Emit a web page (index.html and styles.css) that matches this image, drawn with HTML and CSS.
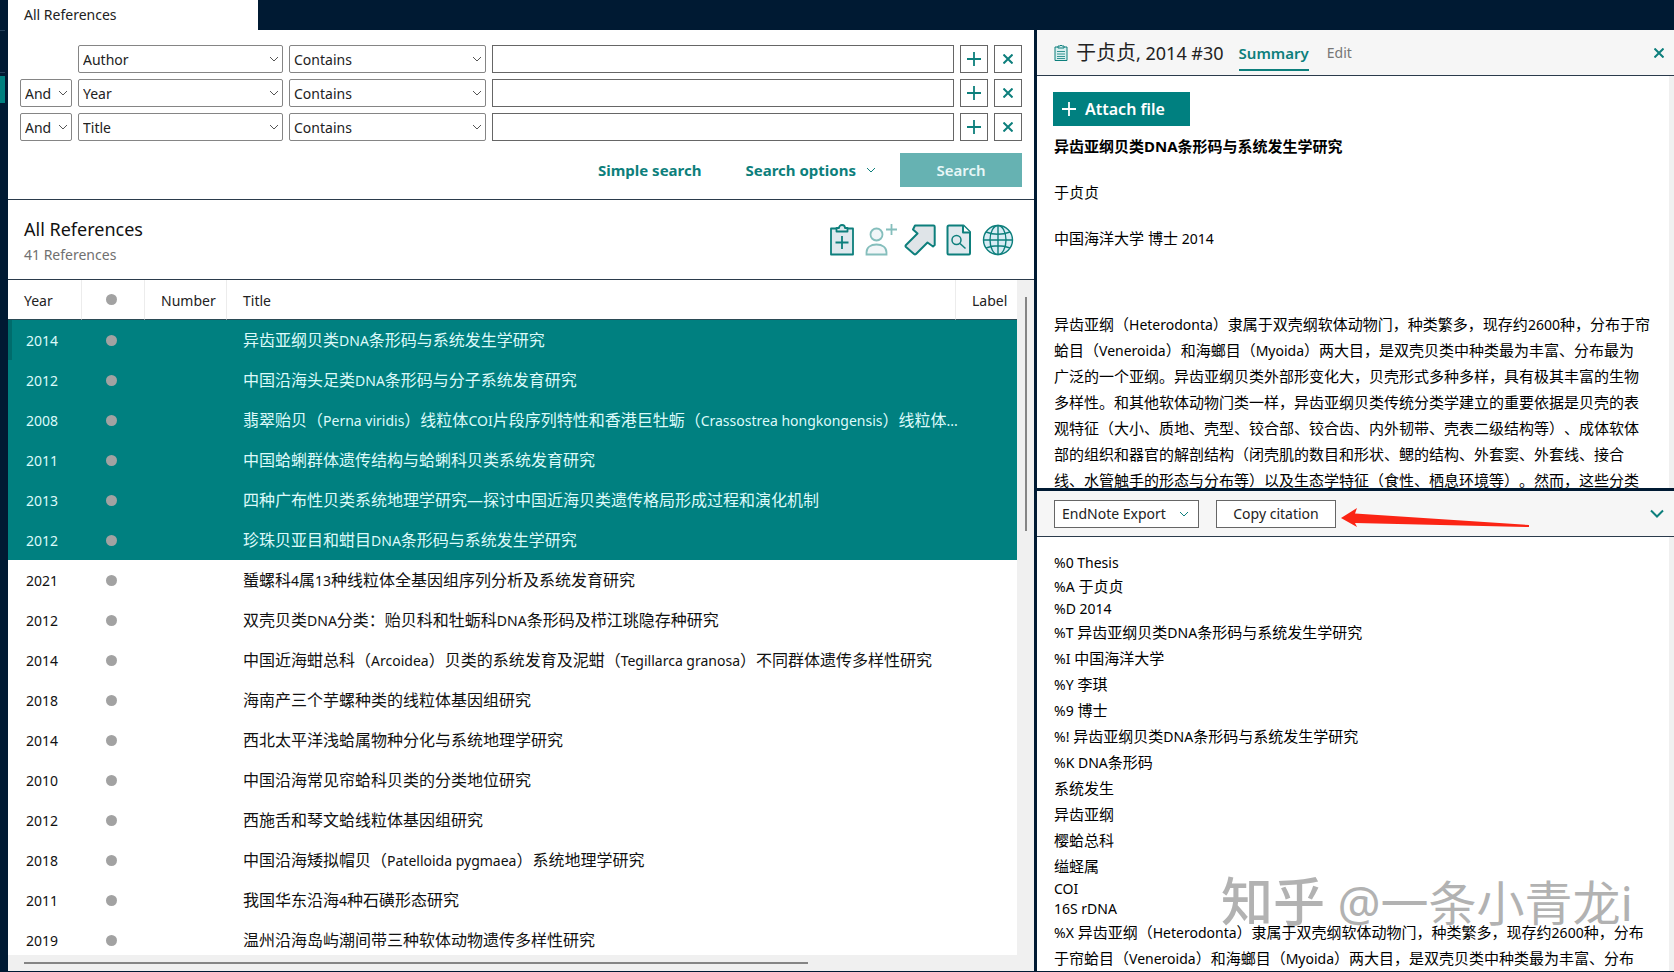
FILE: index.html
```html
<!DOCTYPE html>
<html lang="zh-CN">
<head>
<meta charset="utf-8">
<title>All References</title>
<link rel="stylesheet" href="styles.css">
</head>
<body>
<svg class="sprite" aria-hidden="true">
  <symbol id="chevron" viewBox="0 0 10 6"><path d="M1 1l4 4 4-4" fill="none" stroke="currentColor" stroke-width="1"/></symbol>
  <symbol id="chevron-bold" viewBox="0 0 14 9"><path d="M1 1.500l6 6 6-6" fill="none" stroke="currentColor" stroke-width="2"/></symbol>
  <symbol id="plus" viewBox="0 0 14 14"><path d="M7 0v14M0 7h14" fill="none" stroke="currentColor" stroke-width="1.800"/></symbol>
  <symbol id="cross" viewBox="0 0 10 10"><path d="M.5.5l9 9M9.500.5l-9 9" fill="none" stroke="currentColor" stroke-width="2"/></symbol>
</svg>
<div class="app">
  <div class="rail"><span class="rail-top"></span><span class="rail-item"></span><span class="rail-active"></span></div>
  <div class="tabs"><button class="tab" type="button">All References</button></div>

  <main class="library">
    <form class="search">
      <div class="rules">
        <div class="rule">
          <span></span>
          <label class="pick"><select aria-label="Field 1"><option>Author</option></select><svg><use href="#chevron"/></svg></label>
          <label class="pick"><select aria-label="Condition 1"><option>Contains</option></select><svg><use href="#chevron"/></svg></label>
          <input type="text" aria-label="Search term 1">
          <button class="square" type="button" aria-label="Add row"><svg class="plus"><use href="#plus"/></svg></button>
          <button class="square" type="button" aria-label="Remove row"><svg class="cross"><use href="#cross"/></svg></button>
        </div>
        <div class="rule">
          <label class="pick"><select aria-label="Operator 2"><option>And</option></select><svg><use href="#chevron"/></svg></label>
          <label class="pick"><select aria-label="Field 2"><option>Year</option></select><svg><use href="#chevron"/></svg></label>
          <label class="pick"><select aria-label="Condition 2"><option>Contains</option></select><svg><use href="#chevron"/></svg></label>
          <input type="text" aria-label="Search term 2">
          <button class="square" type="button" aria-label="Add row"><svg class="plus"><use href="#plus"/></svg></button>
          <button class="square" type="button" aria-label="Remove row"><svg class="cross"><use href="#cross"/></svg></button>
        </div>
        <div class="rule">
          <label class="pick"><select aria-label="Operator 3"><option>And</option></select><svg><use href="#chevron"/></svg></label>
          <label class="pick"><select aria-label="Field 3"><option>Title</option></select><svg><use href="#chevron"/></svg></label>
          <label class="pick"><select aria-label="Condition 3"><option>Contains</option></select><svg><use href="#chevron"/></svg></label>
          <input type="text" aria-label="Search term 3">
          <button class="square" type="button" aria-label="Add row"><svg class="plus"><use href="#plus"/></svg></button>
          <button class="square" type="button" aria-label="Remove row"><svg class="cross"><use href="#cross"/></svg></button>
        </div>
      </div>
      <div class="actions">
        <button class="text-button" type="button">Simple search</button>
        <button class="text-button" type="button">Search options <svg class="small-chevron"><use href="#chevron"/></svg></button>
        <button class="search-button" type="button">Search</button>
      </div>
    </form>

    <header class="group">
      <div>
        <h1>All References</h1>
        <p class="count">41 References</p>
      </div>
      <div class="tools">
        <button type="button" aria-label="New reference">
          <svg viewBox="0 0 32 32"><g fill="#dfe9ee" stroke="#0d7f7c" stroke-width="1.800" stroke-linejoin="round"><path d="M5 4.500h22v26h-22z"/><path d="M10.500 7.500v-3.500h2.500a3 3 0 0 1 6 0h2.500v3.500z"/><path d="M16 12v13M9.500 18.500h13" fill="none"/></g></svg>
        </button>
        <button type="button" class="faded" aria-label="Share group">
          <svg viewBox="0 0 32 32"><g fill="#e6eff2" stroke="#0d7f7c" stroke-width="1.800"><circle cx="11.500" cy="10.500" r="6"/><path d="M1.500 30.500v-2c0-5 4-8 10-8s10 3 10 8v2z"/><path d="M26.500 0v11M21 5.500h11" fill="none"/></g></svg>
        </button>
        <button type="button" aria-label="Export">
          <svg viewBox="0 0 32 32"><path d="M11 1.500h18.500a1.200 1.200 0 0 1 1.200 1.200V21l-1.700 1.500-5.500-4L12 30q-1 .8-2 0l-8-7q-1-1 0-2L13.500 9.500 9 5.500z" fill="#dfe4e8" stroke="#0d7f7c" stroke-width="2" stroke-linejoin="round"/></svg>
        </button>
        <button type="button" aria-label="Find full text">
          <svg viewBox="0 0 32 32"><g fill="#dfe9ee" stroke="#0d7f7c" stroke-width="2" stroke-linejoin="round"><path d="M6 1.500h14.500l6.500 6.500V29q0 1.500-1.500 1.500H6q-1.500 0-1.500-1.500V3q0-1.500 1.500-1.500z"/><path d="M20 1.500v7h7" fill="#fff"/><circle cx="13.500" cy="16" r="4.500" stroke-width="1.500"/><path d="M17 19.500l5.500 5" stroke-width="1.500"/></g></svg>
        </button>
        <button type="button" aria-label="Online search">
          <svg viewBox="0 0 32 32"><g fill="none" stroke="#0d7f7c" stroke-width="1.400"><circle cx="16" cy="16" r="14.500" fill="#d8ecf5"/><ellipse cx="16" cy="16" rx="8" ry="14.500"/><path d="M16 1.500v29M1.500 16h29M4 8q12 4.500 24 0M4 24q12-4.500 24 0"/></g></svg>
        </button>
      </div>
    </header>

    <div class="list">
      <div class="list-view">
        <table>
          <colgroup><col class="c-year"><col class="c-dot"><col class="c-number"><col><col class="c-label"></colgroup>
          <thead><tr><th>Year</th><th><i class="dot"></i></th><th>Number</th><th>Title</th><th>Label</th></tr></thead>
          <tbody>
            <tr class="on current"><td>2014</td><td><i class="dot"></i></td><td></td><td>异齿亚纲贝类<span class="en">DNA</span>条形码与系统发生学研究</td><td></td></tr>
            <tr class="on"><td>2012</td><td><i class="dot"></i></td><td></td><td>中国沿海头足类<span class="en">DNA</span>条形码与分子系统发育研究</td><td></td></tr>
            <tr class="on"><td>2008</td><td><i class="dot"></i></td><td></td><td>翡翠贻贝（<span class="en">Perna viridis</span>）线粒体<span class="en">COI</span>片段序列特性和香港巨牡蛎（<span class="en">Crassostrea hongkongensis</span>）线粒体<span class="en">...</span></td><td></td></tr>
            <tr class="on"><td>2011</td><td><i class="dot"></i></td><td></td><td>中国蛤蜊群体遗传结构与蛤蜊科贝类系统发育研究</td><td></td></tr>
            <tr class="on"><td>2013</td><td><i class="dot"></i></td><td></td><td>四种广布性贝类系统地理学研究—探讨中国近海贝类遗传格局形成过程和演化机制</td><td></td></tr>
            <tr class="on"><td>2012</td><td><i class="dot"></i></td><td></td><td>珍珠贝亚目和蚶目<span class="en">DNA</span>条形码与系统发生学研究</td><td></td></tr>
            <tr><td>2021</td><td><i class="dot"></i></td><td></td><td>蜑螺科<span class="en">4</span>属<span class="en">13</span>种线粒体全基因组序列分析及系统发育研究</td><td></td></tr>
            <tr><td>2012</td><td><i class="dot"></i></td><td></td><td>双壳贝类<span class="en">DNA</span>分类：贻贝科和牡蛎科<span class="en">DNA</span>条形码及栉江珧隐存种研究</td><td></td></tr>
            <tr><td>2014</td><td><i class="dot"></i></td><td></td><td>中国近海蚶总科（<span class="en">Arcoidea</span>）贝类的系统发育及泥蚶（<span class="en">Tegillarca granosa</span>）不同群体遗传多样性研究</td><td></td></tr>
            <tr><td>2018</td><td><i class="dot"></i></td><td></td><td>海南产三个芋螺种类的线粒体基因组研究</td><td></td></tr>
            <tr><td>2014</td><td><i class="dot"></i></td><td></td><td>西北太平洋浅蛤属物种分化与系统地理学研究</td><td></td></tr>
            <tr><td>2010</td><td><i class="dot"></i></td><td></td><td>中国沿海常见帘蛤科贝类的分类地位研究</td><td></td></tr>
            <tr><td>2012</td><td><i class="dot"></i></td><td></td><td>西施舌和琴文蛤线粒体基因组研究</td><td></td></tr>
            <tr><td>2018</td><td><i class="dot"></i></td><td></td><td>中国沿海矮拟帽贝（<span class="en">Patelloida pygmaea</span>）系统地理学研究</td><td></td></tr>
            <tr><td>2011</td><td><i class="dot"></i></td><td></td><td>我国华东沿海<span class="en">4</span>种石磺形态研究</td><td></td></tr>
            <tr><td>2019</td><td><i class="dot"></i></td><td></td><td>温州沿海岛屿潮间带三种软体动物遗传多样性研究</td><td></td></tr>
          </tbody>
        </table>
      </div>
      <div class="bar-v"><span class="thumb"></span></div>
      <div class="bar-h"><span class="thumb"></span></div>
    </div>
  </main>

  <aside class="detail">
    <header class="detail-head">
      <svg class="ref-icon" viewBox="0 0 14 18"><g fill="#d9efef" stroke="#0d7f7c"><path d="M1 3h12v13.500H1z"/><path d="M4 4V2h2q1-2 2 0h2v2z"/><path d="M3 7.500h8M3 10h8M3 12.500h8M3 14.500h8" stroke-width=".8"/></g></svg>
      <h2>于贞贞<span class="en">, 2014 #30</span></h2>
      <button class="view active" type="button">Summary</button>
      <button class="view" type="button">Edit</button>
      <button class="close" type="button" aria-label="Close"><svg class="cross"><use href="#cross"/></svg></button>
    </header>
    <section class="summary">
      <button class="attach" type="button"><svg class="plus"><use href="#plus"/></svg>Attach file</button>
      <p class="strong">异齿亚纲贝类<span class="en">DNA</span>条形码与系统发生学研究</p>
      <p>于贞贞</p>
      <p>中国海洋大学 博士 <span class="en">2014</span></p>
      <p class="abstract">异齿亚纲（<span class="en">Heterodonta</span>）隶属于双壳纲软体动物门，种类繁多，现存约<span class="en">2600</span>种，分布于帘<br>蛤目（<span class="en">Veneroida</span>）和海螂目（<span class="en">Myoida</span>）两大目，是双壳贝类中种类最为丰富、分布最为<br>广泛的一个亚纲。异齿亚纲贝类外部形变化大，贝壳形式多种多样，具有极其丰富的生物<br>多样性。和其他软体动物门类一样，异齿亚纲贝类传统分类学建立的重要依据是贝壳的表<br>观特征（大小、质地、壳型、铰合部、铰合齿、内外韧带、壳表二级结构等）、成体软体<br>部的组织和器官的解剖结构（闭壳肌的数目和形状、鳃的结构、外套窦、外套线、接合<br>线、水管触手的形态与分布等）以及生态学特征（食性、栖息环境等）。然而，这些分类</p>
    </section>
    <div class="cite-bar">
      <label class="pick style-pick"><select aria-label="Citation style"><option>EndNote Export</option></select><svg><use href="#chevron"/></svg></label>
      <button class="copy" type="button">Copy citation</button>
      <button class="collapse" type="button" aria-label="Collapse"><svg><use href="#chevron-bold"/></svg></button>
      <svg class="arrow" viewBox="0 0 190 20" aria-hidden="true"><path d="M0 10L16 0l-2 5.500L188 17v2L14 15l2 4z" fill="#fb2414"/></svg>
    </div>
    <section class="citation">
      <p class="en">%0 Thesis</p>
      <p><span class="en">%A</span> 于贞贞</p>
      <p class="en">%D 2014</p>
      <p><span class="en">%T</span> 异齿亚纲贝类<span class="en">DNA</span>条形码与系统发生学研究</p>
      <p><span class="en">%I</span> 中国海洋大学</p>
      <p><span class="en">%Y</span> 李琪</p>
      <p><span class="en">%9</span> 博士</p>
      <p><span class="en">%!</span> 异齿亚纲贝类<span class="en">DNA</span>条形码与系统发生学研究</p>
      <p><span class="en">%K DNA</span>条形码</p>
      <p>系统发生</p>
      <p>异齿亚纲</p>
      <p>樱蛤总科</p>
      <p>缢蛏属</p>
      <p class="en">COI</p>
      <p class="en">16S rDNA</p>
      <p><span class="en">%X</span> 异齿亚纲（<span class="en">Heterodonta</span>）隶属于双壳纲软体动物门，种类繁多，现存约<span class="en">2600</span>种，分布<br>于帘蛤目（<span class="en">Veneroida</span>）和海螂目（<span class="en">Myoida</span>）两大目，是双壳贝类中种类最为丰富、分布</p>
      <div class="watermark"><b>知乎</b> @一条小青龙i</div>
    </section>
  </aside>
</div>
</body>
</html>
```

FILE: styles.css
```css
* { box-sizing: border-box; }

body {
  margin: 0;
  font: 14px/20px "Noto Sans", "Noto Sans CJK SC", sans-serif;
  color: #111;
  background: #001a33;
  text-spacing-trim: space-all;
}

h1, h2, p { margin: 0; font-weight: 400; }

button {
  border: 0;
  padding: 0;
  background: none;
  color: #0d7f7c;
  font: inherit;
}

span.en { line-height: 1; }

.sprite { display: none; }
svg { display: block; }
.plus { width: 14px; height: 14px; }
.cross { width: 10px; height: 10px; }

.app {
  display: grid;
  grid-template: 30px minmax(0, 1fr) / 8px minmax(0, 1026fr) minmax(0, 640fr);
  height: 100vh;
  padding-bottom: 1px;
}

.rail {
  grid-row: 1 / 3;
  display: flex;
  flex-direction: column;
  width: 5px;
}
.rail-top { height: 31px; border-bottom: 1px solid #24405a; }
.rail-item { height: 42px; border-bottom: 1px solid #24405a; }
.rail-active { height: 27px; margin-top: 3px; background: #008080; }

.tabs { grid-column: 2 / 4; display: flex; }
.tab {
  width: 250px;
  padding: 0 16px;
  background: #fff;
  color: #222;
  text-align: left;
}

.library {
  display: flex;
  flex-direction: column;
  background: #fff;
  min-height: 0;
}

.search {
  padding: 15px 12px 12px;
  border-bottom: 1px solid #2b3b4c;
}
.rules { display: grid; gap: 6px; }
.rule {
  display: grid;
  grid-template-columns: 52px 205px 197px 1fr 28px 28px;
  gap: 6px;
  height: 28px;
}
.rule input {
  min-width: 0;
  border: 1px solid #666;
  padding: 0 6px;
  font: inherit;
}
.square {
  display: grid;
  place-items: center;
  border: 1px solid #666;
  background: #fff;
}

.pick { display: grid; align-items: center; }
.pick select, .pick svg { grid-area: 1 / 1; }
.pick select {
  appearance: none;
  width: 100%;
  height: 28px;
  padding: 2px 4px 0;
  border: 1px solid #858585;
  border-radius: 2px;
  background: #fff;
  color: #222;
  font: inherit;
}
.pick svg {
  justify-self: end;
  width: 10px;
  height: 6px;
  margin-right: 4px;
  color: #555;
  pointer-events: none;
}

.actions {
  display: flex;
  justify-content: flex-end;
  align-items: center;
  margin-top: 12px;
  font-size: 15px;
}
.text-button {
  display: flex;
  align-items: center;
  gap: 10px;
  margin-right: 44px;
  font-weight: 700;
}
.text-button + .text-button { margin-right: 24px; }
.small-chevron { width: 10px; height: 6px; }
.search-button {
  width: 122px;
  height: 34px;
  background: #66b2b2;
  color: #e8f7f7;
  font-weight: 600;
}

.group {
  display: flex;
  justify-content: space-between;
  align-items: flex-start;
  height: 80px;
  padding: 17px 20px 0 16px;
  border-bottom: 1px solid #2b3b4c;
}
h1 { font-size: 18px; line-height: 24px; }
.count { margin-top: 4px; color: #707070; }
.tools { display: flex; gap: 7px; padding-top: 7px; }
.tools svg { width: 32px; height: 32px; }
.faded { opacity: .5; }

.list {
  flex: 1;
  display: grid;
  grid-template: minmax(0, 1fr) 16px / minmax(0, 1fr) 17px;
  min-height: 0;
  background: #f0f0f0;
}
.list-view { overflow: hidden; background: #fff; }

table {
  width: 100%;
  table-layout: fixed;
  border-collapse: separate;
  border-spacing: 0;
}
.c-year { width: 74px; }
.c-dot { width: 63px; }
.c-number { width: 82px; }
.c-label { width: 61px; }
th {
  height: 40px;
  padding: 2px 0 0 16px;
  border-right: 1px solid #ececec;
  border-bottom: 1px solid #2b4a55;
  color: #222;
  font-weight: 400;
  text-align: left;
}
th:last-child { border-right: 0; }
th:nth-child(2) { padding: 0 4px 0 0; }
td {
  height: 40px;
  padding: 0 0 0 16px;
  white-space: nowrap;
}
td:nth-child(1) { padding: 2px 0 0 18px; }
td:nth-child(2) { padding: 0 5px 0 0; }
td:nth-child(4) { font-size: 16px; }
td .en { font-size: 14px; }
.on { background: #008080; color: #dcfafa; }
.current td:first-child { box-shadow: inset 4px 0 #006c6c; }
.dot {
  display: block;
  width: 11px;
  height: 11px;
  margin: 0 auto;
  border-radius: 50%;
  background: #a2a2a2;
}

.bar-v { padding: 17px 7px 0 8px; }
.bar-v .thumb { display: block; width: 2px; height: 234px; background: #858585; }
.bar-h { padding: 7px 0 0 16px; }
.bar-h .thumb { display: block; width: 79%; height: 2px; background: #858585; }

.detail {
  display: grid;
  grid-template-rows: 46px minmax(0, 415fr) 46px minmax(0, 434fr);
  margin-left: 3px;
  background: #fff;
}
.detail-head {
  display: flex;
  align-items: center;
  padding: 0 10px 0 17px;
  border-bottom: 1px solid #2b3b4c;
  background: #f6f6f6;
}
.ref-icon { width: 14px; height: 18px; margin-right: 8px; }
h2 { font-size: 20px; line-height: 28px; color: #222; }
h2 .en { font-size: 18px; }
.view {
  height: 32px;
  margin: 4px 0 0 15px;
  padding-bottom: 2px;
  border-bottom: 2px solid transparent;
  color: #777;
}
.view.active { border-color: #0d7f7c; color: #0d7f7c; font-weight: 600; font-size: 15px; }
.view + .view { margin-left: 18px; }
.close { margin-left: auto; }

.summary, .citation {
  position: relative;
  overflow: hidden;
  border-right: 5px solid #f0f0f0;
  color: #000;
  font-size: 15px;
  line-height: 26px;
}
.summary .en, .citation .en { font-size: 14px; }
.summary {
  display: flex;
  flex-direction: column;
  align-items: flex-start;
  gap: 20px;
  padding: 16px 10px 0 17px;
}
.summary > * { flex: none; }
.attach {
  display: flex;
  align-items: center;
  gap: 9px;
  width: 137px;
  height: 34px;
  margin-left: -1px;
  padding-left: 9px;
  background: #008080;
  color: #fff;
  font-size: 16px;
  font-weight: 600;
}
.attach + p { margin-top: -13px; }
.strong { font-weight: 700; }
.strong .en { font-size: 15px; }
.abstract { margin-top: 40px; white-space: nowrap; }

.cite-bar {
  position: relative;
  display: flex;
  align-items: center;
  gap: 17px;
  padding: 0 10px 0 17px;
  border-bottom: 1px solid #2b3b4c;
  background: #f6f6f6;
  box-shadow: 0 -3px #001a33;
}
.style-pick { width: 145px; }
.style-pick select { padding: 0 7px; border-color: #666; border-radius: 0; }
.style-pick svg { margin-right: 10px; color: #0d7f7c; }
.copy {
  width: 120px;
  height: 28px;
  border: 1px solid #666;
  background: #fff;
  color: #222;
}
.collapse { margin-left: auto; }
.collapse svg { width: 14px; height: 9px; }
.arrow {
  position: absolute;
  left: 304px;
  top: 17px;
  width: 190px;
  height: 20px;
}

.citation {
  isolation: isolate;
  padding: 16px 10px 0 17px;
  white-space: nowrap;
}
.citation p.en { line-height: 20px; }
.watermark {
  position: absolute;
  z-index: -1;
  right: 36px;
  bottom: 36px;
  color: #b2b2b2;
  font-size: 48px;
  line-height: 64px;
}
.watermark b { font-size: 52px; font-weight: 500; }
```
